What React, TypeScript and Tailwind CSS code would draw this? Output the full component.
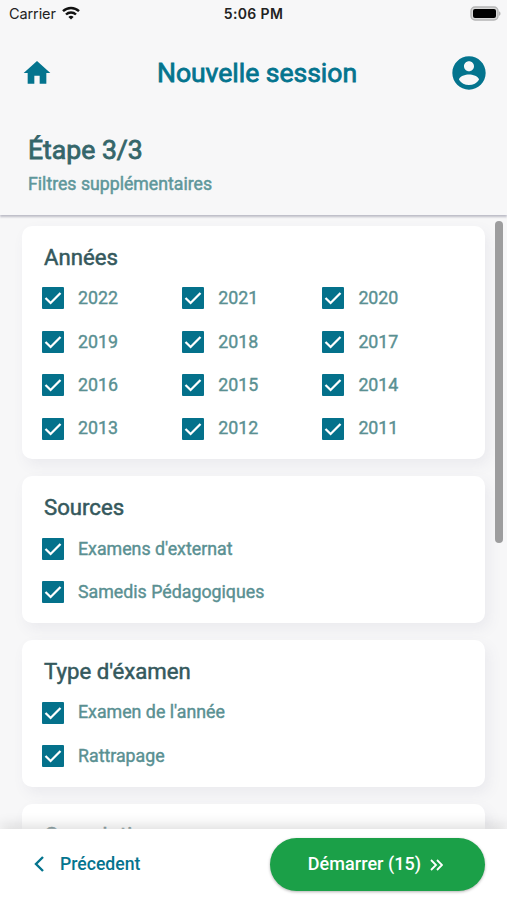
import type { ReactNode } from 'react'

type Section = {
  title: string
  options: string[]
  columns?: boolean
}

const SECTIONS: Section[] = [
  {
    title: 'Années',
    columns: true,
    options: ['2022', '2021', '2020', '2019', '2018', '2017', '2016', '2015', '2014', '2013', '2012', '2011'],
  },
  { title: 'Sources', options: ["Examens d'externat", 'Samedis Pédagogiques'] },
  { title: "Type d'éxamen", options: ["Examen de l'année", 'Rattrapage'] },
  { title: 'Cumulation', options: [] },
]

function StatusBar() {
  return (
    <div className="grid h-[27px] shrink-0 grid-cols-3 items-center pr-[6px] pl-[9px] font-['Inter',sans-serif] text-[#222]">
      <div className="flex items-center gap-[6px] text-[14.5px] tracking-[-0.1px]">
        Carrier
        <svg className="-mt-[2px]" width="18" height="14" viewBox="0 0 18 14" fill="none" stroke="#111" strokeWidth="2.4">
          <path d="M1 5.2a11.5 11.5 0 0 1 16 0" />
          <path d="M4 8.5a7.1 7.1 0 0 1 10 0" />
          <path d="M9 13.6 6.4 10.9a3.8 3.8 0 0 1 5.2 0Z" fill="#111" stroke="none" />
        </svg>
      </div>
      <div className="-ml-[3px] text-center text-[14px] font-semibold tracking-[0.35px]">5:06 PM</div>
      <svg className="justify-self-end" width="31" height="16" viewBox="0 0 31 16">
        <rect x="1" y="1" width="27" height="13" rx="4" fill="#d9d9d9" stroke="#b5b5b5" strokeWidth="1.4" />
        <rect x="3" y="3" width="23" height="9" rx="2" fill="#000" />
        <path d="M29 5.2c2 .8 2 3.8 0 4.6Z" fill="#b5b5b5" />
      </svg>
    </div>
  )
}

function Header() {
  return (
    <div className="flex h-[91px] shrink-0 items-center justify-between pr-[18px] pl-[21px]">
      <svg width="32" height="32" viewBox="0 0 24 24" fill="#04748e">
        <path d="M10 20v-6h4v6h5v-8h3L12 3 2 12h3v8z" />
      </svg>
      <h1 className="ml-[12px] text-[26.6px] tracking-[-0.05px] text-[#04748e] [-webkit-text-stroke:0.8px_#04748e]">
        Nouvelle session
      </h1>
      <svg className="mt-px" width="40" height="40" viewBox="0 0 24 24" fill="#04748e">
        <path d="M12 2C6.48 2 2 6.48 2 12s4.48 10 10 10 10-4.48 10-10S17.52 2 12 2zm0 3c1.66 0 3 1.34 3 3s-1.34 3-3 3-3-1.34-3-3 1.34-3 3-3zm0 14.2c-2.5 0-4.71-1.28-6-3.22.03-1.99 4-3.08 6-3.08 1.99 0 5.97 1.09 6 3.08-1.29 1.94-3.5 3.22-6 3.22z" />
      </svg>
    </div>
  )
}

function Checkbox({ children }: { children: ReactNode }) {
  return (
    <label className="flex h-[43.4px] items-center gap-[14px] text-[17.8px] text-[#5a9092] [-webkit-text-stroke:0.4px_#5a9092]">
      <svg className="shrink-0" width="22" height="22" viewBox="0 0 22 22">
        <rect width="22" height="22" rx="1" fill="#04718b" />
        <path d="M3.5 11 8.6 16 18.5 6" fill="none" stroke="#fff" strokeWidth="2.3" />
      </svg>
      <span>{children}</span>
    </label>
  )
}

function Card({ section }: { section: Section }) {
  return (
    <section className="shrink-0 rounded-[10px] bg-white pt-[15px] pb-[9px] pl-5 shadow-[4px_6px_14px_rgba(90,90,130,0.08)]">
      <h3 className="mb-[3.8px] pl-[2px] text-[22.2px] leading-8 text-[#35595d] [-webkit-text-stroke:0.5px_#35595d]">
        {section.title}
      </h3>
      <div className={section.columns ? 'grid grid-cols-[140.2px_140.2px_1fr]' : 'flex flex-col'}>
        {section.options.map((option) => (
          <Checkbox key={option}>{option}</Checkbox>
        ))}
      </div>
    </section>
  )
}

export default function App() {
  return (
    <div className="flex h-[900px] w-[507px] flex-col overflow-hidden bg-[#f7f7f8] font-['Roboto',sans-serif]">
      <StatusBar />
      <Header />
      <div className="z-10 h-[97px] shrink-0 bg-[#f7f7f8] pl-7 shadow-[0_2px_2px_rgba(80,80,110,0.35)]">
        <h2 className="pt-[14px] text-[26.6px] leading-9 text-[#35666a] [-webkit-text-stroke:0.8px_#35666a]">Étape 3/3</h2>
        <p className="mt-1 text-[17.7px] leading-6 text-[#5f979b] [-webkit-text-stroke:0.5px_#5f979b]">
          Filtres supplémentaires
        </p>
      </div>

      <main className="relative flex min-h-0 flex-1 flex-col gap-[17.1px] overflow-hidden pt-[11px] pr-[22px] pl-[22px]">
        {SECTIONS.map((section) => (
          <Card key={section.title} section={section} />
        ))}
        <div className="absolute top-[6px] right-[4px] h-[322px] w-2 rounded-full bg-[#9d9d9e]" />
      </main>

      {/* light fade above the bar softens whatever scrolls under it */}
      <div className="z-10 -mt-[6px] h-[6px] shrink-0 bg-linear-to-b from-white/0 to-white/60" />
      <footer className="z-10 flex h-[71px] shrink-0 items-center justify-between bg-white pr-[22px] pl-[33px] shadow-[0_-2px_14px_rgba(0,0,0,0.16)]">
        <button className="flex items-center gap-[15px] text-[17.6px] font-medium text-[#04748e]">
          <svg width="12" height="18" viewBox="0 0 12 18" fill="none" stroke="#04748e" strokeWidth="2.4">
            <path d="M10 2 3 9l7 7" />
          </svg>
          <span className="-mt-px">Précedent</span>
        </button>
        <button className="flex h-[53px] w-[215px] items-center justify-center gap-[9px] rounded-full bg-[#1ba048] pr-[4px] text-[18px] font-medium text-white shadow-[0_1px_3px_rgba(0,0,0,0.3)]">
          <span className="-mt-[2px] tracking-[0.05px]">Démarrer (15)</span>
          <svg width="13" height="12" viewBox="0 0 13 12" fill="none" stroke="#fff" strokeWidth="1.8">
            <path d="m1 1 5 5-5 5M7 1l5 5-5 5" />
          </svg>
        </button>
      </footer>
    </div>
  )
}
